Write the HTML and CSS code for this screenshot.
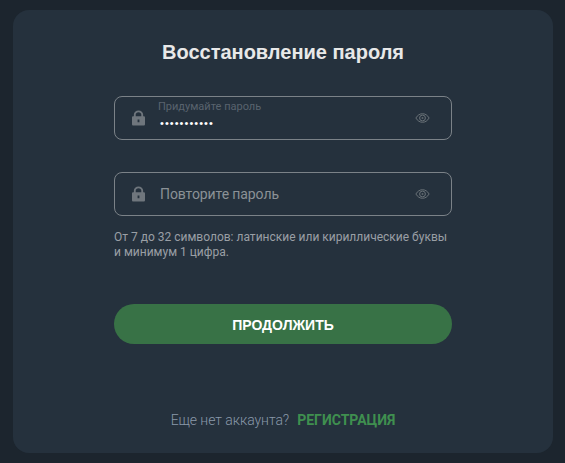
FILE: index.html
```html
<!DOCTYPE html>
<html lang="ru">
<head>
<meta charset="utf-8">
<title>Восстановление пароля</title>
<link rel="stylesheet" href="styles.css">
</head>
<body>
<main class="card">
  <h1 class="title">Восстановление пароля</h1>
  <div class="field field-first">
    <svg class="lock" viewBox="0 0 14 17" width="13" height="16"><path fill="#6f767d" fill-rule="evenodd" d="M2 6.500V4.800C2 2.200 4.200.3 7 .3s5 1.900 5 4.500V6.500h.6c.8 0 1.400.6 1.400 1.400v7.400c0 .8-.6 1.400-1.400 1.400H1.400C.6 16.700 0 16.100 0 15.300V7.900C0 7.100.6 6.500 1.400 6.500H2zM4 6.500h6V4.800C10 3.300 8.700 2.200 7 2.200S4 3.300 4 4.800v1.700zM6 10v3.200h2V10H6z"/></svg>
    <div class="value-box">
      <span class="float-label">Придумайте пароль</span>
      <span class="dots">•••••••••••</span>
    </div>
    <svg class="eye" viewBox="0 0 16 11" width="15" height="10"><path fill="none" stroke="#71787e" stroke-width="1" d="M.7 5.500C2.600 2.400 5 .8 8 .8s5.400 1.600 7.300 4.700C13.400 8.600 11 10.200 8 10.200S2.600 8.600.7 5.500z"/><circle cx="8" cy="5.500" r="3.200" fill="none" stroke="#71787e" stroke-width="1"/><circle cx="8" cy="5.500" r="1.100" fill="#5f666c"/></svg>
  </div>
  <div class="field field-second">
    <svg class="lock" viewBox="0 0 14 17" width="13" height="16"><path fill="#6f767d" fill-rule="evenodd" d="M2 6.500V4.800C2 2.200 4.200.3 7 .3s5 1.900 5 4.500V6.500h.6c.8 0 1.400.6 1.400 1.400v7.400c0 .8-.6 1.400-1.400 1.400H1.400C.6 16.700 0 16.100 0 15.300V7.900C0 7.100.6 6.500 1.400 6.500H2zM4 6.500h6V4.800C10 3.300 8.700 2.200 7 2.200S4 3.300 4 4.800v1.700zM6 10v3.200h2V10H6z"/></svg>
    <div class="value-box">
      <span class="placeholder">Повторите пароль</span>
    </div>
    <svg class="eye" viewBox="0 0 16 11" width="15" height="10"><path fill="none" stroke="#71787e" stroke-width="1" d="M.7 5.500C2.600 2.400 5 .8 8 .8s5.400 1.600 7.300 4.700C13.400 8.600 11 10.200 8 10.200S2.600 8.600.7 5.500z"/><circle cx="8" cy="5.500" r="3.200" fill="none" stroke="#71787e" stroke-width="1"/><circle cx="8" cy="5.500" r="1.100" fill="#5f666c"/></svg>
  </div>
  <p class="hint">От 7 до 32 символов: латинские или кириллические буквы<br>и минимум 1 цифра.</p>
  <button class="submit" type="button">ПРОДОЛЖИТЬ</button>
  <p class="signup">Еще нет аккаунта?<a class="signup-link" href="#">РЕГИСТРАЦИЯ</a></p>
</main>
</body>
</html>
```
FILE: styles.css
```css
* { box-sizing: border-box; }
html, body { height: 100%; }
body {
  margin: 0;
  padding: 10px 12px 10px 13px;
  background: #1c252e;
  font-family: Roboto, "Liberation Sans", sans-serif;
  overflow: hidden;
}
.card {
  height: 443px;
  padding: 30px 101px 0;
  background: #25313d;
  border-radius: 16px;
  display: flex;
  flex-direction: column;
}
.title {
  margin: 0;
  height: 24px;
  font-family: "Liberation Sans", Arial, sans-serif;
  font-size: 20px;
  line-height: 24px;
  font-weight: 700;
  text-align: center;
  white-space: nowrap;
  color: #e8e8e8;
}
.field {
  height: 44px;
  border: 1px solid #7b8288;
  border-radius: 8px;
  display: flex;
  align-items: center;
  padding: 0 21px 0 17px;
}
.field-first { margin-top: 32px; }
.field-second { margin-top: 32px; }
.lock { flex: none; }
.value-box {
  flex: 1;
  align-self: stretch;
  margin-left: 15px;
  display: flex;
  flex-direction: column;
  justify-content: center;
}
.float-label {
  margin-top: -7px;
  margin-left: -2px;
  font-size: 11px;
  line-height: 13px;
  color: #59636e;
}
.dots {
  margin-top: 4px;
  font-family: "Liberation Sans", Arial, sans-serif;
  font-size: 11px;
  line-height: 13px;
  letter-spacing: 1.05px;
  color: #ffffff;
}
.placeholder {
  font-size: 14px;
  line-height: 18px;
  letter-spacing: -0.1px;
  color: #8b9196;
}
.eye { flex: none; }
.hint {
  margin: 14px 0 0;
  font-size: 12px;
  line-height: 15px;
  color: #9a9fa5;
}
.submit {
  margin-top: 44px;
  height: 40px;
  border: 0;
  border-radius: 20px;
  background: #387246;
  color: #ffffff;
  font: 700 14px/40px "Liberation Sans", Arial, sans-serif;
}
.signup {
  margin: 67px 0 0;
  text-align: center;
  font-size: 14px;
  line-height: 18px;
  font-weight: 300;
  letter-spacing: -0.05px;
  color: #8a99aa;
}
.signup-link {
  margin-left: 8px;
  font-weight: 700;
  letter-spacing: 0;
  color: #3f8f4f;
  text-decoration: none;
}
```
